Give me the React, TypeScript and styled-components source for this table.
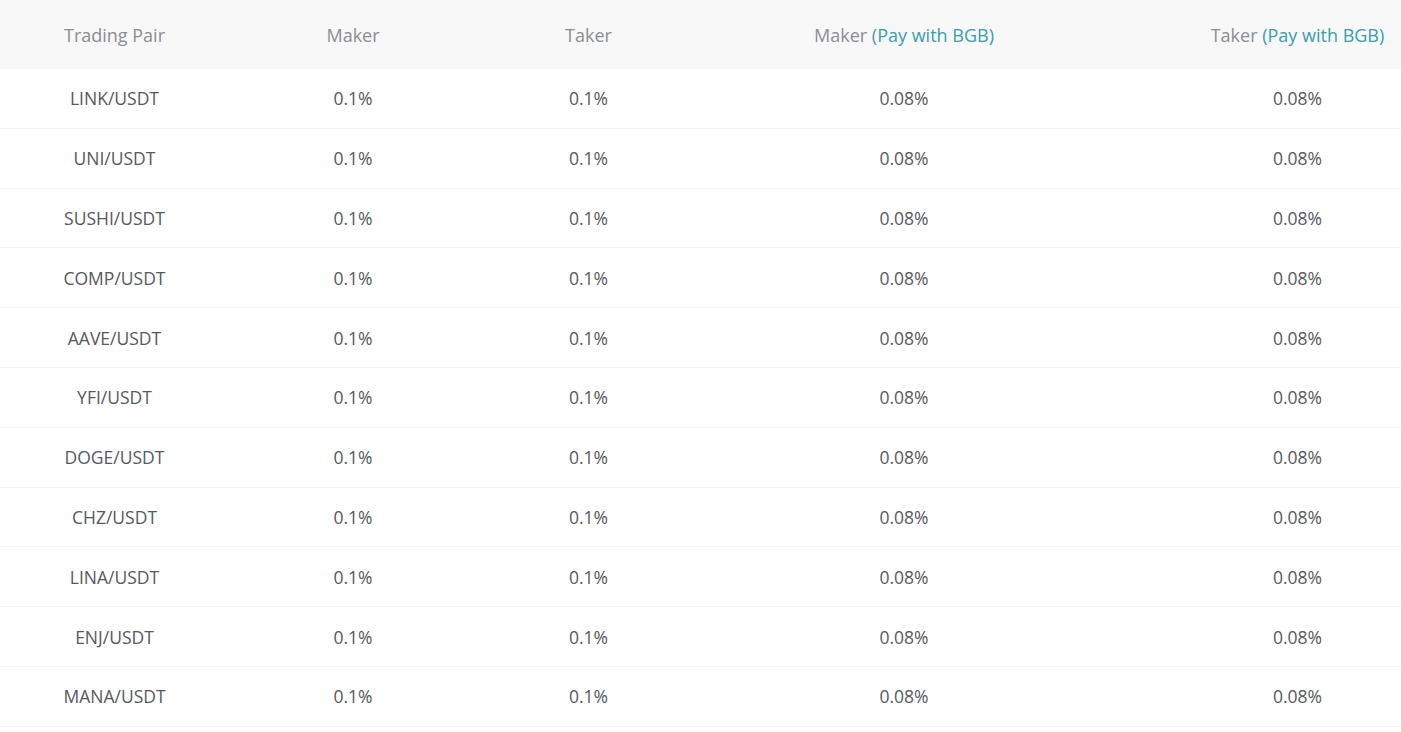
import React from "react";
import styled, { createGlobalStyle } from "styled-components";

const Global = createGlobalStyle`
  html, body { margin: 0; padding: 0; background: #fff; overflow: hidden; }
  body { font-family: "Open Sans", "Noto Sans", sans-serif; }
`;

const Wrap = styled.div`
  width: 100%;
  overflow: hidden;
`;

const Table = styled.div`
  width: 1487px;
  display: flex;
  flex-direction: column;
`;

const Row = styled.div<{ $head?: boolean }>`
  display: grid;
  grid-template-columns: 229px 248px 223px 408px 379px;
  height: ${(p) => (p.$head ? "69px" : "59.8px")};
  background: ${(p) => (p.$head ? "#f8f8f8" : "#fff")};
  border-bottom: ${(p) => (p.$head ? "none" : "1px solid #f3f3f3")};
  box-sizing: border-box;
  align-items: center;
`;

const Cell = styled.div<{ $head?: boolean }>`
  text-align: center;
  font-size: ${(p) => (p.$head ? "18px" : "17.5px")};
  color: ${(p) => (p.$head ? "#8b8e94" : "#555960")};
  white-space: nowrap;
`;

const Accent = styled.span`
  color: #3a9db0;
`;

const pairs = [
  "LINK/USDT",
  "UNI/USDT",
  "SUSHI/USDT",
  "COMP/USDT",
  "AAVE/USDT",
  "YFI/USDT",
  "DOGE/USDT",
  "CHZ/USDT",
  "LINA/USDT",
  "ENJ/USDT",
  "MANA/USDT",
];

export default function App() {
  return (
    <Wrap>
      <Global />
      <Table>
        <Row $head>
          <Cell $head>Trading Pair</Cell>
          <Cell $head>Maker</Cell>
          <Cell $head>Taker</Cell>
          <Cell $head>
            Maker <Accent>(Pay with BGB)</Accent>
          </Cell>
          <Cell $head>
            Taker <Accent>(Pay with BGB)</Accent>
          </Cell>
        </Row>
        {pairs.map((p) => (
          <Row key={p}>
            <Cell>{p}</Cell>
            <Cell>0.1%</Cell>
            <Cell>0.1%</Cell>
            <Cell>0.08%</Cell>
            <Cell>0.08%</Cell>
          </Row>
        ))}
      </Table>
    </Wrap>
  );
}
